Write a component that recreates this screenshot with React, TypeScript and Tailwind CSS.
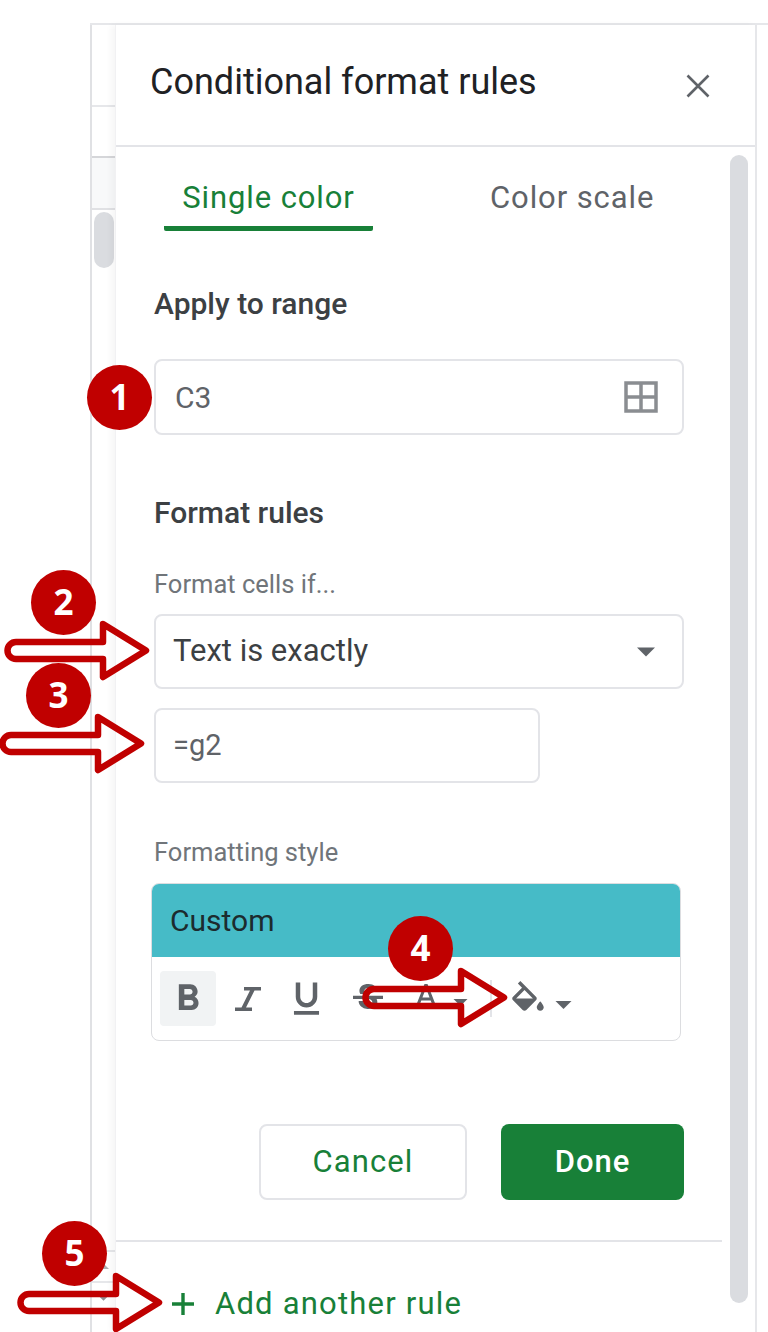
import React from "react";

// Material icon paths for the formatting toolbar
const ICONS = {
  bold: "M15.6 10.79c.97-.67 1.65-1.77 1.65-2.79 0-2.26-1.75-4-4-4H7v14h7.04c2.09 0 3.71-1.7 3.71-3.79 0-1.52-.86-2.82-2.15-3.42zM10 6.5h3c.83 0 1.5.67 1.5 1.5s-.67 1.5-1.5 1.5h-3v-3zm3.5 9H10v-3h3.5c.83 0 1.5.67 1.5 1.5s-.67 1.5-1.5 1.5z",
  underline: "M12 17c3.31 0 6-2.69 6-6V3h-2.5v8c0 1.93-1.57 3.5-3.5 3.5S8.5 12.93 8.5 11V3H6v8c0 3.31 2.69 6 6 6zm-7 2v2h14v-2H5z",
  strike: "M7.24 8.75c-.26-.48-.39-1.03-.39-1.67 0-.61.13-1.16.4-1.67.26-.5.63-.93 1.11-1.29.48-.35 1.05-.63 1.7-.83.66-.19 1.39-.29 2.18-.29.81 0 1.54.11 2.21.34.66.22 1.23.54 1.69.94.47.4.83.88 1.08 1.43.25.55.38 1.15.38 1.81h-3.01c0-.31-.05-.59-.15-.85-.09-.27-.24-.49-.44-.68-.2-.19-.45-.33-.75-.44-.3-.1-.66-.16-1.06-.16-.39 0-.74.04-1.03.13-.29.09-.53.21-.72.36-.19.16-.34.34-.44.55-.1.21-.15.43-.15.66 0 .48.25.88.74 1.21.38.25.77.48 1.41.7H7.39c-.05-.08-.11-.17-.15-.25zM21 12v-2H3v2h9.62c.18.07.4.14.55.2.37.17.66.34.87.51.21.17.35.36.43.57.07.2.11.43.11.69 0 .23-.05.45-.14.66-.09.2-.23.38-.42.53-.19.15-.42.26-.71.35-.29.08-.63.13-1.01.13-.43 0-.83-.04-1.18-.13s-.66-.23-.91-.42c-.25-.19-.45-.44-.59-.75-.14-.31-.25-.76-.25-1.21H6.4c0 .55.08 1.13.24 1.58.16.45.37.85.65 1.21.28.35.6.66.98.92.37.26.78.48 1.22.65.44.17.9.3 1.38.39.48.08.96.13 1.44.13.8 0 1.53-.09 2.18-.28s1.21-.45 1.67-.79c.46-.34.82-.77 1.07-1.27s.38-1.07.38-1.71c0-.6-.1-1.14-.31-1.61-.05-.11-.11-.23-.17-.33H21z",
  color: "M11 2L5.5 16h2.25l1.12-3h6.25l1.12 3h2.25L13 2h-2zm-1.38 9L12 4.67 14.38 11H9.62z",
  fill: "M16.56 8.94L7.62 0 6.21 1.41l2.38 2.38-5.15 5.15c-.59.59-.59 1.54 0 2.12l5.5 5.5c.29.29.68.44 1.06.44s.77-.15 1.06-.44l5.5-5.5c.59-.58.59-1.53 0-2.12zM5.21 10L10 5.21 14.79 10H5.21zM19 11.5s-2 2.17-2 3.5c0 1.1.9 2 2 2s2-.9 2-2c0-1.33-2-3.5-2-3.5z",
};

function ToolIcon({ d, className }: { d: string; className: string }) {
  return (
    <svg viewBox="0 0 24 24" className={className} fill="#5f6368">
      <path d={d} />
    </svg>
  );
}

function Caret({ className }: { className: string }) {
  return (
    <svg viewBox="0 0 10 5" className={className} fill="#5f6368">
      <path d="M0 0h10L5 5z" />
    </svg>
  );
}

function Badge({ n, className }: { n: number; className: string }) {
  return (
    <div
      className={`absolute flex h-[65px] w-[65px] items-center justify-center rounded-full bg-[#c00000] font-['Open_Sans',sans-serif] text-[35px] font-bold text-white ${className}`}
    >
      {n}
    </div>
  );
}

// Callout arrow: only the outline is drawn, the page shows through it
function Arrow({ className }: { className: string }) {
  return (
    <svg viewBox="0 0 148 62" className={`absolute h-[62px] w-[148px] ${className}`}>
      <path
        d="M12 23H99V5L142 31.5L99 58V40H12A8.5 8.5 0 0 1 12 23Z"
        fill="none"
        stroke="#c00000"
        strokeWidth="6.5"
        strokeLinejoin="round"
      />
    </svg>
  );
}

function SectionTitle({ children, className }: { children: React.ReactNode; className: string }) {
  return <h2 className={`text-[30px] leading-[36px] font-medium text-[#3c4043] ${className}`}>{children}</h2>;
}

function Caption({ children, className }: { children: React.ReactNode; className: string }) {
  return <div className={`text-[25.5px] leading-[30px] text-[#70757a] ${className}`}>{children}</div>;
}

export default function App() {
  return (
    <div className="relative h-[1332px] w-[768px] overflow-hidden bg-white font-['Roboto',sans-serif]">
      <div className="ml-[90px] mt-[23px] flex h-[1309px] border-t-2 border-[#e6e7ea]">
        {/* Sheet peeking out behind the panel */}
        <div className="flex w-[25px] flex-col border-l-2 border-[#e0e1e4]">
          <div className="h-[82px] shrink-0 border-b-2 border-[#e6e7ea]" />
          <div className="h-[51px] shrink-0 border-b-2 border-[#d5d6d9]" />
          <div className="h-[52px] shrink-0 border-b-2 border-[#e0e1e4] bg-[#f8f9fa]" />
          <div className="ml-[2px] mt-[2px] h-[56px] w-[20px] shrink-0 rounded-[10px] bg-[#dadce0]" />
          <div className="mt-[982px] flex h-[33px] shrink-0 items-center justify-center border-y-2 border-[#e6e7ea]">
            <Caret className="h-[5px] w-[10px] rotate-180 opacity-50" />
          </div>
          <div className="flex h-[31px] shrink-0 items-center justify-center border-b-2 border-[#e6e7ea]">
            <Caret className="h-[6px] w-[11px] opacity-70" />
          </div>
        </div>

        {/* Panel */}
        <div className="flex w-[642px] flex-col border-r-2 border-[#e6e7ea] border-l border-l-[#f1f1f3] bg-white shadow-[-4px_0_6px_rgba(0,0,0,0.04)]">
          <div className="flex h-[122px] shrink-0 items-start justify-between border-b-2 border-[#e3e4e8] pl-[34px] pr-[45px]">
            <h1 className="mt-[37px] text-[36px] leading-[40px] text-[#202124]">Conditional format rules</h1>
            <svg viewBox="0 0 24 24" className="mt-[49px] h-[24px] w-[24px]" stroke="#5f6368" strokeWidth="2.6" fill="none">
              <path d="M1.5 1.5L22.5 22.5M22.5 1.5L1.5 22.5" />
            </svg>
          </div>

          <div className="flex min-h-0 flex-1">
            <div className="flex w-[606px] flex-col">
              <div className="flex h-[84px] shrink-0 pl-[48px]">
                <div className="flex h-[84px] w-[209px] flex-col items-center justify-end rounded-b-[2px] border-b-[5px] border-[#188038] pb-[10px] text-[31px] leading-[36px] tracking-[0.9px] text-[#188038]">
                  Single color
                </div>
                <div className="ml-[117px] flex h-[84px] flex-col justify-end pb-[15px] text-[31px] leading-[36px] tracking-[0.9px] text-[#5f6368]">
                  Color scale
                </div>
              </div>

              <SectionTitle className="ml-[38px] mt-[55px]">Apply to range</SectionTitle>
              <div className="ml-[38px] mt-[37px] flex h-[76px] w-[530px] items-center justify-between rounded-[8px] border-2 border-[#e3e4e8] pl-[19px] pr-[24px] text-[30px] text-[#5f6368]">
                C3
                <svg viewBox="0 0 34 32" className="h-[32px] w-[34px]" fill="none" stroke="#8a8d91" strokeWidth="3.5">
                  <rect x="2" y="2" width="30" height="28" />
                  <path d="M17 2V30M2 16H32" />
                </svg>
              </div>

              <SectionTitle className="ml-[38px] mt-[60px]">Format rules</SectionTitle>
              <Caption className="ml-[38px] mt-[38px]">Format cells if...</Caption>
              <div className="ml-[38px] mt-[15px] flex h-[75px] w-[530px] items-center justify-between rounded-[8px] border-2 border-[#e3e4e8] pl-[17px] pr-[27px] text-[31px] text-[#3c4043]">
                Text is exactly
                <Caret className="h-[10px] w-[18px]" />
              </div>
              <div className="ml-[38px] mt-[19px] flex h-[75px] w-[386px] items-center rounded-[8px] border-2 border-[#e3e4e8] pl-[17px] text-[29px] text-[#5f6368]">
                =g2
              </div>

              <Caption className="ml-[38px] mt-[54px]">Formatting style</Caption>
              <div className="ml-[35px] mt-[16px] h-[158px] w-[530px] overflow-hidden rounded-[8px] border border-[#dcdde0]">
                <div className="flex h-[73px] items-center bg-[#46bbc7] pl-[18px] text-[30px] text-[#1c2b2e]">Custom</div>
                <div className="flex h-[83px] items-center pl-[8px]">
                  <div className="flex h-[55px] w-[56px] items-center justify-center rounded-[4px] bg-[#f1f3f4]">
                    <ToolIcon d={ICONS.bold} className="h-[44px] w-[44px]" />
                  </div>
                  <svg viewBox="0 0 26 24" className="ml-[19px] h-[24px] w-[26px]" fill="#5f6368">
                    <path d="M9 0H26V3.5H19.5L11 20.5H17V24H0V20.5H6.5L15 3.5H9Z" />
                  </svg>
                  <ToolIcon d={ICONS.underline} className="ml-[24px] h-[43px] w-[43px]" />
                  <ToolIcon d={ICONS.strike} className="ml-[20px] h-[40px] w-[40px]" />
                  <ToolIcon d={ICONS.color} className="ml-[20px] h-[36px] w-[36px]" />
                  <Caret className="ml-[9px] mt-[8px] h-[7px] w-[15px]" />
                  <div className="ml-[22px] h-[37px] w-[2px] bg-[#e3e4e8]" />
                  <ToolIcon d={ICONS.fill} className="ml-[15px] mt-[6px] h-[42px] w-[42px]" />
                  <Caret className="ml-[6px] mt-[13px] h-[8px] w-[17px]" />
                </div>
              </div>

              <div className="ml-[143px] mt-[83px] flex gap-[34px]">
                <div className="flex h-[76px] w-[208px] items-center justify-center rounded-[8px] border-2 border-[#e3e4e8] text-[31px] tracking-[1.1px] text-[#188038]">
                  Cancel
                </div>
                <div className="flex h-[76px] w-[183px] items-center justify-center rounded-[8px] bg-[#188038] text-[31px] font-medium tracking-[0.9px] text-white">
                  Done
                </div>
              </div>

              <div className="mt-[40px] flex flex-1 flex-col border-t-2 border-[#e3e4e8]">
                <div className="ml-[56px] mt-[39px] flex items-center gap-[21px] text-[31px] tracking-[1.2px] text-[#188038]">
                  <svg viewBox="0 0 22 22" className="h-[22px] w-[22px]" stroke="#188038" strokeWidth="3.4">
                    <path d="M11 0V22M0 11H22" />
                  </svg>
                  Add another rule
                </div>
              </div>
            </div>

            {/* Panel scrollbar */}
            <div className="ml-[8px] mt-[8px] h-[1148px] w-[18px] rounded-[9px] bg-[#dadce0]" />
          </div>
        </div>
      </div>

      {/* Callouts drawn over the screenshot */}
      <Badge n={1} className="left-[87px] top-[365px]" />
      <Arrow className="left-[4px] top-[619px]" />
      <Badge n={2} className="left-[31px] top-[570px]" />
      <Arrow className="left-[-1px] top-[712px]" />
      <Badge n={3} className="left-[26px] top-[663px]" />
      <Arrow className="left-[362px] top-[966px]" />
      <Badge n={4} className="left-[388px] top-[916px]" />
      <Arrow className="left-[17px] top-[1271px]" />
      <Badge n={5} className="left-[42px] top-[1221px]" />
    </div>
  );
}
